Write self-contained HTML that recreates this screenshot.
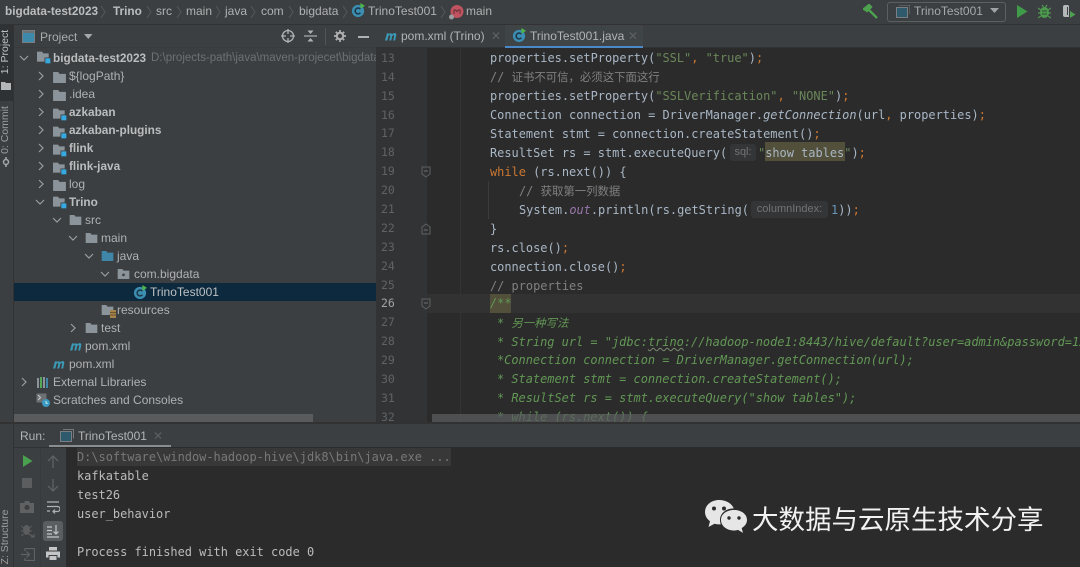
<!DOCTYPE html>
<html><head><meta charset="utf-8">
<style>
html,body{margin:0;padding:0;background:#2b2b2b}
#r{position:relative;width:1080px;height:567px;overflow:hidden;background:#3c3f41;font-family:"Liberation Sans","Noto Sans CJK SC",sans-serif;font-size:12px;color:#afb1b3;filter:blur(.35px)}
#r div,#r span.a,#r svg{position:absolute}
.t{white-space:pre;line-height:18px;height:18px}
.b{font-weight:bold;color:#bbbdbf;font-size:11.8px}
.c{white-space:pre;font-family:"DejaVu Sans Mono","Noto Sans CJK SC",monospace;font-size:11.95px;line-height:19px;height:19px;color:#a9b7c6}
.k{color:#cc7832}.s{color:#6a8759}.g{color:#808080}.d{color:#629755;font-style:italic}.n{color:#6897bb}.p{color:#9876aa;font-style:italic}
.i{font-style:italic}
.z{font-size:11.4px}
.ln{font-family:"DejaVu Sans Mono",monospace;font-size:11.5px;line-height:19px;height:19px;color:#606366;left:381px;white-space:pre}
.o{white-space:pre;font-family:"DejaVu Sans Mono",monospace;font-size:11.95px;line-height:19px;height:19px;color:#bbbbbb;left:77px}
.h{background:#333537;border-radius:3px;color:#747474;font-size:11px;line-height:17px;height:17px;text-align:center;white-space:pre}
</style></head><body><div id="r">
<svg width="0" height="0"><defs>
<symbol id="f" viewBox="0 0 14 12"><path d="M0 0h5.500l1.500 2h7v10H0z" fill="#8b949a"/></symbol>
<symbol id="m" viewBox="0 0 18 14"><path d="M0 0h6l1.500 2H14v10H0z" fill="#8b949a"/><path d="M9 7h6v6H9z" fill="#3c3f41"/><rect x="10" y="8" width="6" height="6" fill="#35a9e0"/></symbol>
<symbol id="cl" viewBox="0 0 16 16"><circle cx="7.500" cy="8.500" r="6.500" fill="#3a8fb3"/><path d="M10 6.600A3.100 3.100 0 1 0 10 10.400" fill="none" stroke="#20394a" stroke-width="1.700"/><path d="M10 0l5 3-5 3z" fill="#4fb548"/></symbol>
<symbol id="ma" viewBox="0 0 14 10"><path d="M1 9.500L3 2.200h1.800l-.3 1.200C5.500 2 7.500 1.600 8 3.400 9.300 1.900 12.500 1.300 12.300 4L11.100 9.500H9.200l1-4.600c.2-1.300-1.400-.9-2 .3L7.200 9.500H5.300l1-4.600c.2-1.300-1.400-.9-2 .3L3.300 9.500z" fill="#3a9ab8"/></symbol>
<symbol id="ch" viewBox="0 0 10 10"><path d="M3 1l4 4-4 4" fill="none" stroke="#9a9da0" stroke-width="1.200"/></symbol>
<symbol id="dn" viewBox="0 0 10 10"><path d="M1 3l4 4 4-4" fill="none" stroke="#9a9da0" stroke-width="1.200"/></symbol>
<symbol id="fd" viewBox="0 0 10 12"><path d="M1 1h8v7L5 11 1 8z" fill="none" stroke="#5c6063"/><path d="M3 5h4" stroke="#6a6e71"/></symbol>
</defs></svg>

<!-- nav bar -->
<div style="left:0;top:24px;width:1080px;height:1px;background:#323232"></div>
<div class="t b" style="left:5px;top:2px">bigdata-test2023</div>
<div class="t b" style="left:113px;top:2px">Trino</div>
<div class="t" style="left:156px;top:2px">src</div>
<div class="t" style="left:186px;top:2px">main</div>
<div class="t" style="left:225px;top:2px">java</div>
<div class="t" style="left:261px;top:2px">com</div>
<div class="t" style="left:299px;top:2px">bigdata</div>
<div class="t" style="left:368px;top:2px">TrinoTest001</div>
<div class="t" style="left:466px;top:2px">main</div>
<svg style="left:100px;top:5px" width="7" height="14"><path d="M1 1l4 6-4 6" fill="none" stroke="#55585a"/></svg>
<svg style="left:146px;top:5px" width="7" height="14"><path d="M1 1l4 6-4 6" fill="none" stroke="#55585a"/></svg>
<svg style="left:176px;top:5px" width="7" height="14"><path d="M1 1l4 6-4 6" fill="none" stroke="#55585a"/></svg>
<svg style="left:215px;top:5px" width="7" height="14"><path d="M1 1l4 6-4 6" fill="none" stroke="#55585a"/></svg>
<svg style="left:250px;top:5px" width="7" height="14"><path d="M1 1l4 6-4 6" fill="none" stroke="#55585a"/></svg>
<svg style="left:288px;top:5px" width="7" height="14"><path d="M1 1l4 6-4 6" fill="none" stroke="#55585a"/></svg>
<svg style="left:342px;top:5px" width="7" height="14"><path d="M1 1l4 6-4 6" fill="none" stroke="#55585a"/></svg>
<svg style="left:440px;top:5px" width="7" height="14"><path d="M1 1l4 6-4 6" fill="none" stroke="#55585a"/></svg>
<svg style="left:351px;top:3px" width="15" height="15"><use href="#cl"/></svg>
<svg style="left:448px;top:3px" width="16" height="17" viewBox="0 0 16 17"><circle cx="9" cy="8.500" r="6.500" fill="#c0535f"/><path d="M6 11V7h1.500l1.500 1.500L10.500 7H12v4" fill="none" stroke="#5f3038" stroke-width="1"/><circle cx="3.500" cy="14" r="2.500" fill="#9a9da0"/></svg>

<!-- top-right toolbar -->
<svg style="left:863px;top:4px" width="16" height="16" viewBox="0 0 16 16"><path d="M1 5l5-4 2 2-4 4zM5.500 5.500L14 14" fill="#4ea24f" stroke="#4ea24f" stroke-width="2.300"/></svg>
<div style="left:887px;top:2px;width:117px;height:18px;border:1px solid #5e6060;border-radius:3px"></div>
<svg style="left:896px;top:5px" width="14" height="13" viewBox="0 0 14 13"><path d="M3 0h11v9" fill="none" stroke="#777"/><rect x="0.500" y="2.500" width="11" height="10" fill="#2f5a6d" stroke="#7b7e80"/></svg>
<div class="t" style="left:914px;top:2px;color:#a6a8aa">TrinoTest001</div>
<svg style="left:990px;top:8px" width="10" height="6"><path d="M0 0h9L4.500 5z" fill="#a0a2a4"/></svg>
<svg style="left:1017px;top:5px" width="11" height="13"><path d="M0 0l10.500 6.500L0 13z" fill="#3f9b4a"/></svg>
<svg style="left:1038px;top:4px" width="13" height="15" viewBox="0 0 13 15"><ellipse cx="6.500" cy="8.500" rx="4.500" ry="5.500" fill="#4e9a4e"/><path d="M0 4l3 2M13 4l-3 2M0 9h3M13 9h-3M0 14l3-2M13 14l-3-2M4 1l1.500 2M9 1L7.500 3" stroke="#4e9a4e" stroke-width="1.200"/><path d="M4 7h5M4 10h5" stroke="#2f4a32"/></svg>
<svg style="left:1061px;top:4px" width="15" height="16" viewBox="0 0 15 16"><path d="M2 3Q2 1 4 1h3l1 1v11H4Q2 13 2 11z" fill="#b4b6b8"/><path d="M6 3h1v8H6z" fill="#3c3f41"/><path d="M9 7l5.500 3.500L9 14z" fill="#4ea24f"/></svg>

<!-- left stripe -->
<div style="left:0;top:25px;width:14px;height:542px;background:#3c3f41;border-right:1px solid #323232;box-sizing:border-box"></div>
<div style="left:0;top:25px;width:13px;height:76px;background:#2f3234"></div>
<div class="t" style="left:-25px;top:45px;width:60px;text-align:center;transform:rotate(-90deg);font-size:10.500px;height:14px;line-height:14px;color:#c0c2c4">1: Project</div>
<svg style="left:1px;top:81px" width="10" height="10"><path d="M0 1h4l1 1h5v7H0z" fill="#b4b6b8"/></svg>
<div class="t" style="left:-25px;top:123px;width:60px;text-align:center;transform:rotate(-90deg);font-size:10.500px;height:14px;line-height:14px;color:#9a9c9e">0: Commit</div>
<svg style="left:1px;top:157px" width="10" height="10"><circle cx="5" cy="5" r="2.500" fill="none" stroke="#a5a7a9" stroke-width="1.500"/><path d="M5 0v2.500M5 7.500V10" stroke="#a5a7a9" stroke-width="1.500"/></svg>
<div class="t" style="left:-29px;top:530px;width:68px;text-align:center;transform:rotate(-90deg);font-size:10.500px;height:14px;line-height:14px;color:#9a9c9e">Z: Structure</div>

<!-- project header -->
<div style="left:14px;top:47px;width:362px;height:1px;background:#383b3d"></div>
<svg style="left:22px;top:30px" width="13" height="13"><rect x="0.500" y="0.500" width="12" height="12" fill="#3d89ab" stroke="#7b7e80"/><rect x="1" y="1" width="11" height="2" fill="#6d7073"/></svg>
<div class="t" style="left:40px;top:28px;color:#a9abad">Project</div>
<svg style="left:84px;top:34px" width="10" height="6"><path d="M0 0h8.500L4.300 5z" fill="#a5a7a9"/></svg>
<svg style="left:281px;top:29px" width="14" height="14" viewBox="0 0 14 14"><circle cx="7" cy="7" r="5.500" fill="none" stroke="#afb1b3" stroke-width="1.300"/><path d="M7 0v5M7 9v5M0 7h5M9 7h5" stroke="#afb1b3" stroke-width="1.300"/></svg>
<svg style="left:304px;top:29px" width="13" height="14" viewBox="0 0 13 14"><path d="M0 7h13" stroke="#afb1b3" stroke-width="1.200"/><path d="M3.500 1.500h6L6.500 5zM3.500 12.500h6L6.500 9z" fill="#afb1b3"/></svg>
<div style="left:325px;top:28px;width:1px;height:17px;background:#515355"></div>
<svg style="left:334px;top:30px" width="12" height="12" viewBox="0 0 12 12"><circle cx="6" cy="6" r="3.200" fill="none" stroke="#afb1b3" stroke-width="2"/><path d="M6 0v2.500M6 9.500V12M0 6h2.500M9.500 6H12M1.800 1.800l1.800 1.800M8.400 8.400l1.800 1.800M1.800 10.200l1.800-1.800M8.400 3.600l1.800-1.800" stroke="#afb1b3" stroke-width="1.700"/></svg>
<div style="left:358px;top:36px;width:11px;height:2px;background:#afb1b3"></div>

<!-- selected row -->
<div style="left:14px;top:283px;width:362px;height:18px;background:#0d293e"></div>

<!-- tree -->
<svg style="left:19px;top:53px" width="10" height="10"><use href="#dn"/></svg>
<svg style="left:37px;top:51px" width="15" height="13"><use href="#m"/></svg>
<div class="t b" style="left:53px;top:49px">bigdata-test2023</div>
<div class="t" style="left:151px;top:49px;width:225px;overflow:hidden;color:#6e7173;font-size:11.500px">D:\projects-path\java\maven-projecet\bigdata-test2023</div>

<svg style="left:36px;top:71px" width="10" height="10"><use href="#ch"/></svg>
<svg style="left:53px;top:72px" width="13" height="11"><use href="#f"/></svg>
<div class="t" style="left:69px;top:67px">${logPath}</div>
<svg style="left:36px;top:89px" width="10" height="10"><use href="#ch"/></svg>
<svg style="left:53px;top:90px" width="13" height="11"><use href="#f"/></svg>
<div class="t" style="left:69px;top:85px">.idea</div>
<svg style="left:36px;top:107px" width="10" height="10"><use href="#ch"/></svg>
<svg style="left:53px;top:108px" width="15" height="13"><use href="#m"/></svg>
<div class="t b" style="left:69px;top:103px">azkaban</div>
<svg style="left:36px;top:125px" width="10" height="10"><use href="#ch"/></svg>
<svg style="left:53px;top:126px" width="15" height="13"><use href="#m"/></svg>
<div class="t b" style="left:69px;top:121px">azkaban-plugins</div>
<svg style="left:36px;top:143px" width="10" height="10"><use href="#ch"/></svg>
<svg style="left:53px;top:144px" width="15" height="13"><use href="#m"/></svg>
<div class="t b" style="left:69px;top:139px">flink</div>
<svg style="left:36px;top:161px" width="10" height="10"><use href="#ch"/></svg>
<svg style="left:53px;top:162px" width="15" height="13"><use href="#m"/></svg>
<div class="t b" style="left:69px;top:157px">flink-java</div>
<svg style="left:36px;top:179px" width="10" height="10"><use href="#ch"/></svg>
<svg style="left:53px;top:180px" width="13" height="11"><use href="#f"/></svg>
<div class="t" style="left:69px;top:175px">log</div>
<svg style="left:35px;top:197px" width="10" height="10"><use href="#dn"/></svg>
<svg style="left:53px;top:196px" width="15" height="13"><use href="#m"/></svg>
<div class="t b" style="left:69px;top:193px">Trino</div>
<svg style="left:52px;top:215px" width="10" height="10"><use href="#dn"/></svg>
<svg style="left:69px;top:215px" width="13" height="10"><use href="#f"/></svg>
<div class="t" style="left:85px;top:211px">src</div>
<svg style="left:68px;top:233px" width="10" height="10"><use href="#dn"/></svg>
<svg style="left:85px;top:233px" width="13" height="10"><use href="#f"/></svg>
<div class="t" style="left:101px;top:229px">main</div>
<svg style="left:84px;top:251px" width="10" height="10"><use href="#dn"/></svg>
<svg style="left:101px;top:251px" width="13" height="10" viewBox="0 0 14 12"><path d="M0 0h5.500l1.500 2h7v10H0z" fill="#3f86a8"/></svg>
<div class="t" style="left:117px;top:247px">java</div>
<svg style="left:100px;top:269px" width="10" height="10"><use href="#dn"/></svg>
<svg style="left:117px;top:269px" width="13" height="10" viewBox="0 0 14 12"><path d="M0 0h5.500l1.500 2h7v10H0z" fill="#8b949a"/><circle cx="7" cy="7" r="1.600" fill="#3c3f41"/></svg>
<div class="t" style="left:134px;top:265px">com.bigdata</div>
<svg style="left:133px;top:285px" width="15" height="15"><use href="#cl"/></svg>
<div class="t" style="left:150px;top:283px;color:#bcc0c2">TrinoTest001</div>
<svg style="left:101px;top:305px" width="13" height="10"><use href="#f"/></svg>
<svg style="left:110px;top:310px" width="6" height="8"><rect width="6" height="8" fill="#a5834c"/><path d="M0 2.500h6M0 5h6" stroke="#6d5530"/></svg>
<div class="t" style="left:117px;top:301px">resources</div>
<svg style="left:68px;top:323px" width="10" height="10"><use href="#ch"/></svg>
<svg style="left:85px;top:323px" width="13" height="10"><use href="#f"/></svg>
<div class="t" style="left:101px;top:319px">test</div>
<svg style="left:69px;top:341px" width="14" height="10"><use href="#ma"/></svg>
<div class="t" style="left:85px;top:337px">pom.xml</div>
<svg style="left:52px;top:359px" width="14" height="10"><use href="#ma"/></svg>
<div class="t" style="left:69px;top:355px">pom.xml</div>
<svg style="left:19px;top:377px" width="10" height="10"><use href="#ch"/></svg>
<svg style="left:36px;top:376px" width="14" height="12" viewBox="0 0 14 12"><path d="M1 2h2v10H1z" fill="#8b949a"/><path d="M4 1h2v11H4z" fill="#54a857"/><path d="M7 1h2v11H7z" fill="#8b949a"/><path d="M10 2h2v10h-2z" fill="#3f86a8"/></svg>
<div class="t" style="left:53px;top:373px">External Libraries</div>
<svg style="left:36px;top:393px" width="15" height="15" viewBox="0 0 15 15"><rect x="0.500" y="0.500" width="10" height="9" fill="#6d7073"/><path d="M2 2l2.500 2.500L2 7" fill="none" stroke="#ccc"/><circle cx="10" cy="10" r="4" fill="#3a9ac4"/><path d="M10 8v2.200h1.800" fill="none" stroke="#dfe" stroke-width="0.800"/></svg>
<div class="t" style="left:53px;top:391px">Scratches and Consoles</div>

<!-- tree scrollbar -->
<div style="left:14px;top:414px;width:299px;height:8px;background:#595b5d"></div>

<!-- tabs -->
<div style="left:376px;top:25px;width:704px;height:23px;background:#3c3f41"></div>
<div style="left:376px;top:47px;width:704px;height:1px;background:#323232"></div>
<svg style="left:384px;top:31px" width="14" height="10"><use href="#ma"/></svg>
<div class="t" style="left:401px;top:27px;color:#b2b4b6">pom.xml (Trino)</div>
<div class="t" style="left:491px;top:27px;color:#5d6062;font-size:12px">✕</div>
<div style="left:505px;top:25px;width:138px;height:24px;box-sizing:border-box;border-bottom:3px solid #4a88c7;background:#3f4446"></div>
<svg style="left:512px;top:28px" width="15" height="15"><use href="#cl"/></svg>
<div class="t" style="left:530px;top:27px;color:#b2b4b6">TrinoTest001.java</div>
<div class="t" style="left:628px;top:27px;color:#5d6062;font-size:12px">✕</div>

<!-- editor -->
<div style="left:376px;top:48px;width:704px;height:374px;background:#2b2b2b;overflow:hidden" id="ed"></div>
<div style="left:376px;top:48px;width:51px;height:374px;background:#313335"></div>
<div style="left:427px;top:294px;width:653px;height:19px;background:#323232"></div>
<div style="left:460px;top:48px;width:1px;height:374px;background:#333333"></div>
<div style="left:488px;top:181px;width:1px;height:38px;background:#3b3b3b"></div>
<div style="left:765px;top:142px;width:80px;height:19px;background:#52503a"></div>
<div style="left:490px;top:294px;width:21px;height:19px;background:#52503a"></div>

<div class="ln" style="top:49px">13</div>
<div class="ln" style="top:68px">14</div>
<div class="ln" style="top:87px">15</div>
<div class="ln" style="top:106px">16</div>
<div class="ln" style="top:124px">17</div>
<div class="ln" style="top:143px">18</div>
<div class="ln" style="top:162px">19</div>
<div class="ln" style="top:181px">20</div>
<div class="ln" style="top:200px">21</div>
<div class="ln" style="top:219px">22</div>
<div class="ln" style="top:238px">23</div>
<div class="ln" style="top:257px">24</div>
<div class="ln" style="top:276px">25</div>
<div class="ln" style="top:294px;color:#a4a3a3">26</div>
<div class="ln" style="top:313px">27</div>
<div class="ln" style="top:332px">28</div>
<div class="ln" style="top:351px">29</div>
<div class="ln" style="top:370px">30</div>
<div class="ln" style="top:389px">31</div>
<div class="ln" style="top:408px">32</div>
<svg style="left:421px;top:166px" width="10" height="12"><use href="#fd"/></svg>
<svg style="left:421px;top:223px" width="10" height="12" viewBox="0 0 10 12"><path d="M1 11h8V4L5 1 1 4z" fill="none" stroke="#5c6063"/><path d="M3 7h4" stroke="#6a6e71"/></svg>
<svg style="left:421px;top:298px" width="10" height="12"><use href="#fd"/></svg>

<div class="c" style="left:490px;top:49px">properties.setProperty(<span class="s">"SSL"</span><span class="k">,</span> <span class="s">"true"</span>)<span class="k">;</span></div>
<div class="c g" style="left:490px;top:68px;color:#808080">// <span class="z">证书不可信，必须这下面这行</span></div>
<div class="c" style="left:490px;top:87px">properties.setProperty(<span class="s">"SSLVerification"</span><span class="k">,</span> <span class="s">"NONE"</span>)<span class="k">;</span></div>
<div class="c" style="left:490px;top:106px">Connection connection = DriverManager.<span class="i">getConnection</span>(url<span class="k">,</span> properties)<span class="k">;</span></div>
<div class="c" style="left:490px;top:125px">Statement stmt = connection.createStatement()<span class="k">;</span></div>
<div class="c" style="left:490px;top:144px">ResultSet rs = stmt.executeQuery(</div>
<div class="h" style="left:730px;top:144px;width:26px">sql:</div>
<div class="c" style="left:758px;top:144px"><span class="s">"</span>show tables<span class="s">"</span>)<span class="k">;</span></div>
<div class="c" style="left:490px;top:163px"><span class="k">while</span> (rs.next()) {</div>
<div class="c" style="left:519px;top:182px;color:#808080">// <span class="z">获取第一列数据</span></div>
<div class="c" style="left:519px;top:201px">System.<span class="p">out</span>.println(rs.getString(</div>
<div class="h" style="left:751px;top:201px;width:77px">columnIndex:</div>
<div class="c" style="left:831px;top:201px"><span class="n">1</span>))<span class="k">;</span></div>
<div class="c" style="left:490px;top:220px">}</div>
<div class="c" style="left:490px;top:239px">rs.close()<span class="k">;</span></div>
<div class="c" style="left:490px;top:258px">connection.close()<span class="k">;</span></div>
<div class="c" style="left:490px;top:277px;color:#808080">// properties</div>
<div class="c d" style="left:490px;top:294px">/**</div>
<div class="c d" style="left:497px;top:314px">* <span class="z">另一种写法</span></div>
<div class="c d" style="left:497px;top:333px">* String url = "jdbc:<span style="text-decoration:underline;text-decoration-style:wavy;text-decoration-color:#7a8a70;text-decoration-thickness:1px">trino</span>://hadoop-node1:8443/hive/default?user=admin&amp;password=123456";</div>
<div class="c d" style="left:497px;top:351px">*Connection connection = DriverManager.getConnection(url);</div>
<div class="c d" style="left:497px;top:370px">* Statement stmt = connection.createStatement();</div>
<div class="c d" style="left:497px;top:389px">* ResultSet rs = stmt.executeQuery("show tables");</div>
<div class="c d" style="left:497px;top:408px;height:14px;overflow:hidden">* while (rs.next()) {</div>
<div style="left:432px;top:414px;width:648px;height:8px;background:rgba(90,92,94,.75)"></div>
<div style="left:0;top:422px;width:1080px;height:2px;background:#323232"></div>

<!-- run panel -->
<div class="t" style="left:20px;top:427px;color:#b0b2b4">Run:</div>
<svg style="left:60px;top:429px" width="14" height="13" viewBox="0 0 14 13"><path d="M3 .5h10.500v9" fill="none" stroke="#777"/><rect x="0.500" y="2.500" width="11" height="10" fill="#2f5a6d" stroke="#7b7e80"/></svg>
<div class="t" style="left:78px;top:427px;color:#b2b4b6">TrinoTest001</div>
<div class="t" style="left:153px;top:427px;color:#5d6062">✕</div>
<div style="left:49px;top:445px;width:122px;height:3px;background:#8a8d90"></div>
<div style="left:66px;top:447px;width:1014px;height:120px;background:#2b2b2b"></div>
<div style="left:40px;top:448px;width:1px;height:119px;background:#383b3d"></div>
<div style="left:14px;top:447px;width:52px;height:1px;background:#323232"></div>
<div style="left:77px;top:448px;width:374px;height:18px;background:#383838"></div>

<svg style="left:23px;top:455px" width="10" height="12"><path d="M0 0l9.500 6L0 12z" fill="#49a04f"/></svg>
<div style="left:22px;top:478px;width:10px;height:10px;background:#5b5d5f"></div>
<svg style="left:20px;top:501px" width="14" height="12" viewBox="0 0 14 12"><path d="M0 2h4l1-2h4l1 2h4v10H0z" fill="#5f6163"/><circle cx="7" cy="6.500" r="2.500" fill="#3c3f41"/></svg>
<svg style="left:21px;top:523px" width="14" height="15" viewBox="0 0 14 15"><ellipse cx="5.500" cy="7" rx="3.500" ry="5" fill="#5b5d5f"/><path d="M0 3l3 2M11 3L8 5M0 8h3M11 8H8M0 13l3-2M11 13l-3-2" stroke="#5b5d5f"/><path d="M8 11l5 3M13 11v3h-3" fill="none" stroke="#5b5d5f" stroke-width="1.200"/></svg>
<svg style="left:21px;top:548px" width="14" height="13" viewBox="0 0 14 13"><path d="M4 3V.5h9.500v12H4V10" fill="none" stroke="#5f6163" stroke-width="1.200"/><path d="M0 6.500h8M5.500 3.500l3 3-3 3" fill="none" stroke="#5f6163" stroke-width="1.200"/></svg>

<svg style="left:47px;top:455px" width="12" height="13" viewBox="0 0 12 13"><path d="M6 13V1M1 6l5-5 5 5" fill="none" stroke="#5f6163" stroke-width="1.300"/></svg>
<svg style="left:47px;top:479px" width="12" height="13" viewBox="0 0 12 13"><path d="M6 0v12M1 7l5 5 5-5" fill="none" stroke="#5f6163" stroke-width="1.300"/></svg>
<svg style="left:46px;top:501px" width="14" height="13" viewBox="0 0 14 13"><path d="M1 1h12M1 5.500h10.500a2.500 2.500 0 0 1 0 5H7M9 8.500l-2 2 2 2M1 10h3" fill="none" stroke="#afb1b3" stroke-width="1.200"/></svg>
<div style="left:43px;top:521px;width:20px;height:20px;background:#5a5e60;border-radius:3px"></div>
<svg style="left:46px;top:524px" width="14" height="14" viewBox="0 0 14 14"><path d="M1 13h12M1 3h5M1 6.500h5M1 10h5M10 1v9M7.500 7.500L10 10l2.500-2.500" fill="none" stroke="#c4c6c8" stroke-width="1.200"/></svg>
<svg style="left:46px;top:547px" width="14" height="14" viewBox="0 0 14 14"><rect x="3" y="0" width="8" height="3.500" fill="#c4c6c8"/><rect x="0" y="4.500" width="14" height="6" fill="#c4c6c8"/><rect x="3" y="8.500" width="8" height="5" fill="#c4c6c8" stroke="#3c3f41"/></svg>

<div class="o" style="top:448px;color:#787878">D:\software\window-hadoop-hive\jdk8\bin\java.exe ...</div>
<div class="o" style="top:467px">kafkatable</div>
<div class="o" style="top:486px">test26</div>
<div class="o" style="top:505px">user_behavior</div>
<div class="o" style="top:543px">Process finished with exit code 0</div>

<!-- watermark -->
<svg style="left:704px;top:499px" width="44" height="37" viewBox="0 0 44 37">
<path d="M15 1C7 1 1 6.500 1 13c0 3.800 2 7 5 9.300L4.500 28l6-3.200c1.500.4 3 .6 4.500.6.600 0 1.200 0 1.800-.1C16.300 24 16 22.500 16 21c0-6.500 5.800-11.500 13-11.500h.8C28 4.500 22 1 15 1z" fill="#e6e6e6"/>
<path d="M43 21c0-6-5.800-10-13-10s-13 4-13 10 5.800 10.500 13 10.500c1.500 0 2.800-.2 4-.6l5 3-1.300-4.800C41 27 43 24.200 43 21z" fill="#e6e6e6"/>
<circle cx="10" cy="9.500" r="2" fill="#2b2b2b"/><circle cx="20" cy="9.500" r="2" fill="#2b2b2b"/>
<circle cx="25" cy="19" r="1.700" fill="#2b2b2b"/><circle cx="35" cy="19" r="1.700" fill="#2b2b2b"/>
</svg>
<div style="left:752px;top:500px;white-space:pre;font-family:'Noto Sans CJK SC',sans-serif;font-size:26.500px;line-height:36px;color:#f2f2f2">大数据与云原生技术分享</div>
</div></body></html>
